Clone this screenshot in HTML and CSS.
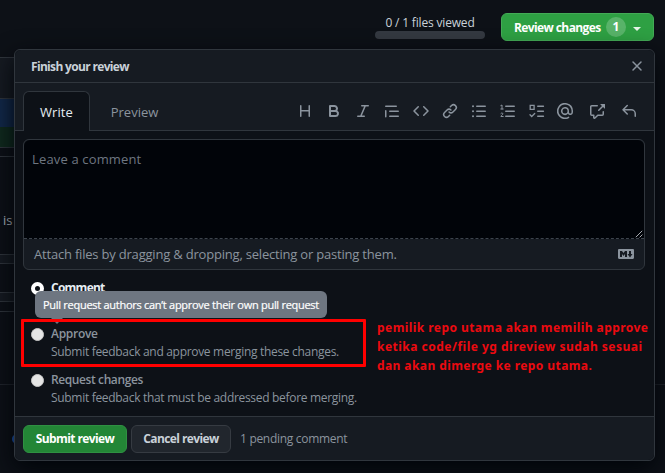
FILE: index.html
```html
<!DOCTYPE html>
<html lang="en">
<head>
<meta charset="utf-8">
<title>Finish your review</title>
<link rel="stylesheet" href="styles.css">
</head>
<body>
<div class="page">
  <header class="topbar">
    <div class="viewed">
      <span class="viewed-label">0 / 1 files viewed</span>
      <div class="progress"></div>
    </div>
    <button class="btn review-btn"><span class="review-label">Review changes</span><span class="counter">1</span><span class="caret"></span></button>
  </header>
  <div class="diff">
    <div class="file-head"></div>
    <div class="hunk"></div>
    <div class="added"></div>
    <div class="divider-a"></div>
    <div class="remark"><span>is</span></div>
    <div class="band"></div>
    <div class="space"></div>
    <div class="band"></div>
    <div class="band plain"></div>
    <div class="thread"></div>
    <div class="dot-row"><span class="dot"></span></div>
  </div>
</div>

<section class="popover">
  <div class="pop-head">
    <h1 class="pop-title">Finish your review</h1>
    <svg class="close" width="12" height="12" viewBox="0 0 12 12"><path d="M2 2l8 8M10 2l-8 8"/></svg>
  </div>
  <div class="tabs">
    <div class="tab active"><span class="t-write">Write</span></div>
    <div class="tab"><span class="t-preview">Preview</span></div>
    <div class="toolbar">
      <svg viewBox="0 0 16 16"><path d="M3.75 2a.75.75 0 0 1 .75.75V7h7V2.75a.75.75 0 0 1 1.5 0v10.5a.75.75 0 0 1-1.5 0V8.5h-7v4.75a.75.75 0 0 1-1.5 0V2.75A.75.75 0 0 1 3.75 2Z"/></svg>
      <svg viewBox="0 0 16 16"><path d="M4 2h4.5a3.501 3.501 0 0 1 2.852 5.53A3.499 3.499 0 0 1 9.5 14H4a1 1 0 0 1-1-1V3a1 1 0 0 1 1-1Zm1 7v3h4.5a1.5 1.5 0 0 0 0-3Zm3.5-2a1.5 1.5 0 0 0 0-3H5v3Z"/></svg>
      <svg viewBox="0 0 16 16"><path d="M6 2.75A.75.75 0 0 1 6.75 2h6.5a.75.75 0 0 1 0 1.5h-2.505l-3.858 9H9.25a.75.75 0 0 1 0 1.5h-6.5a.75.75 0 0 1 0-1.5h2.505l3.858-9H6.75A.75.75 0 0 1 6 2.75Z"/></svg>
      <svg viewBox="0 0 16 16"><path d="M1.75 2.5h10.5a.75.75 0 0 1 0 1.5H1.75a.75.75 0 0 1 0-1.5Zm4 5h8.5a.75.75 0 0 1 0 1.5h-8.5a.75.75 0 0 1 0-1.5Zm0 5h8.5a.75.75 0 0 1 0 1.5h-8.5a.75.75 0 0 1 0-1.5ZM2.5 7.75v6a.75.75 0 0 1-1.5 0v-6a.75.75 0 0 1 1.5 0Z"/></svg>
      <svg viewBox="0 0 16 16"><path d="m11.28 3.22 4.25 4.25a.75.75 0 0 1 0 1.06l-4.25 4.25a.749.749 0 0 1-1.275-.326.749.749 0 0 1 .215-.734L13.94 8l-3.72-3.72a.749.749 0 0 1 .326-1.275.749.749 0 0 1 .734.215Zm-6.56 0a.751.751 0 0 1 1.042.018.751.751 0 0 1 .018 1.042L2.06 8l3.72 3.72a.749.749 0 0 1-.326 1.275.749.749 0 0 1-.734-.215L.47 8.53a.75.75 0 0 1 0-1.06Z"/></svg>
      <svg viewBox="0 0 16 16"><path d="m7.775 3.275 1.25-1.25a3.5 3.5 0 1 1 4.95 4.95l-2.5 2.5a3.5 3.5 0 0 1-4.95 0 .751.751 0 0 1 .018-1.042.751.751 0 0 1 1.042-.018 1.998 1.998 0 0 0 2.83 0l2.5-2.5a2.002 2.002 0 0 0-2.83-2.83l-1.25 1.25a.751.751 0 0 1-1.042-.018.751.751 0 0 1-.018-1.042Zm-4.69 9.64a1.998 1.998 0 0 0 2.83 0l1.25-1.25a.751.751 0 0 1 1.042.018.751.751 0 0 1 .018 1.042l-1.25 1.25a3.5 3.5 0 1 1-4.95-4.95l2.5-2.5a3.5 3.5 0 0 1 4.95 0 .751.751 0 0 1-.018 1.042.751.751 0 0 1-1.042.018 1.998 1.998 0 0 0-2.83 0l-2.5 2.5a1.998 1.998 0 0 0 0 2.83Z"/></svg>
      <svg class="line" viewBox="0 0 16 16"><path d="M5.7 3.25h8.6M5.7 8.25h8.6M5.7 13.25h8.6"/><path d="M2 3.25h.01M2 8.25h.01M2 13.25h.01" stroke-width="2"/></svg>
      <svg class="line" viewBox="0 0 16 16"><path d="M5.7 3.25h8.6M5.7 8.25h8.6M5.7 13.25h8.6"/><path d="M.8 2.6 2 2v4M.8 6h2.4M.9 10.4c.4-.6 2-.6 2 .4 0 .9-1.9 1.6-2 2.7h2.3" stroke-width="1"/></svg>
      <svg class="line" viewBox="0 0 16 16"><path d="M8.7 3.25h5.8M8.7 8.25h5.8M8.7 13.25h5.8M1.2 2.4h3.9v4H1.2ZM1 11.7l1.7 1.8 3-3"/></svg>
      <svg class="mention" viewBox="0 0 16 16"><path d="M4.75 2.37a6.501 6.501 0 0 0 6.5 11.26.75.75 0 0 1 .75 1.298A7.999 7.999 0 0 1 .989 4.148 8 8 0 0 1 16 7.75v1.5a2.75 2.75 0 0 1-5.072 1.475 3.999 3.999 0 0 1-6.65-4.19A4 4 0 0 1 12 8v1.25a1.25 1.25 0 0 0 2.5 0V7.867a6.5 6.5 0 0 0-9.75-5.496ZM10.5 8a2.5 2.5 0 1 0-5 0 2.5 2.5 0 0 0 5 0Z"/></svg>
      <svg class="wide" viewBox="0 0 16 16"><path d="M2.75 3.5a.25.25 0 0 0-.25.25v7.5c0 .138.112.25.25.25h2a.75.75 0 0 1 .75.75v2.19l2.72-2.72a.749.749 0 0 1 .53-.22h4.5a.25.25 0 0 0 .25-.25v-2.5a.75.75 0 0 1 1.5 0v2.5A1.75 1.75 0 0 1 13.25 13H9.06l-2.573 2.573A1.458 1.458 0 0 1 4 14.543V13H2.75A1.75 1.75 0 0 1 1 11.25v-7.5C1 2.784 1.784 2 2.75 2h5.5a.75.75 0 0 1 0 1.5ZM16 1.25v4.146a.25.25 0 0 1-.427.177L14.03 4.03l-3.75 3.75a.749.749 0 0 1-1.275-.326.749.749 0 0 1 .215-.734l3.75-3.75-1.543-1.543A.25.25 0 0 1 11.604 1h4.146a.25.25 0 0 1 .25.25Z"/></svg>
      <svg class="wide" viewBox="0 0 16 16"><path d="M6.78 1.97a.75.75 0 0 1 0 1.06L3.81 6h6.44A4.75 4.75 0 0 1 15 10.75v2.5a.75.75 0 0 1-1.5 0v-2.5a3.25 3.25 0 0 0-3.25-3.25H3.81l2.97 2.97a.749.749 0 0 1-.326 1.275.749.749 0 0 1-.734-.215L1.47 7.28a.75.75 0 0 1 0-1.06l4.25-4.25a.75.75 0 0 1 1.06 0Z"/></svg>
    </div>
  </div>
  <div class="editor">
    <div class="textarea">
      <span class="t-placeholder">Leave a comment</span>
      <svg class="grip" width="8" height="8" viewBox="0 0 8 8"><path d="M.8 7.2 7.2.8M4.6 7.4l2.8-2.8"/></svg>
    </div>
    <div class="attach">
      <span class="t-attach">Attach files by dragging &amp; dropping, selecting or pasting them.</span>
      <svg class="md" width="16" height="16" viewBox="0 0 16 16"><path d="M14.85 3c.63 0 1.15.52 1.14 1.15v7.7c0 .63-.51 1.15-1.15 1.15H1.15C.52 13 0 12.48 0 11.84V4.15C0 3.52.52 3 1.15 3ZM9 11V5H7L5.5 7 4 5H2v6h2V8l1.5 1.92L7 8v3Zm2.99.5L14.5 8H13V5h-2v3H9.5Z"/></svg>
    </div>
  </div>
  <div class="options">
    <div class="option">
      <span class="radio checked"></span>
      <div><div class="name strong"><span class="t-comment">Comment</span></div></div>
    </div>
    <div class="option">
      <span class="radio"></span>
      <div><div class="name"><span class="t-approve">Approve</span></div><div class="desc"><span>Submit feedback and approve merging these changes.</span></div></div>
    </div>
    <div class="option">
      <span class="radio"></span>
      <div><div class="name"><span class="t-request">Request changes</span></div><div class="desc"><span>Submit feedback that must be addressed before merging.</span></div></div>
    </div>
    <div class="tooltip"><span class="t-tip">Pull request authors can’t approve their own pull request</span></div>
    <div class="highlight"></div>
    <div class="note"><div class="n1">pemilik repo utama akan memilih approve</div><div class="n2">ketika code/file yg direview sudah sesuai</div><div class="n3">dan akan dimerge ke repo utama.</div></div>
  </div>
  <div class="pop-foot">
    <button class="btn submit">Submit review</button>
    <button class="btn cancel">Cancel review</button>
    <span class="t-pending">1 pending comment</span>
  </div>
</section>
</body>
</html>
```

FILE: styles.css
```css
* { box-sizing: border-box; }
body { margin: 0; width: 665px; height: 473px; overflow: hidden; background: #0d1117; color: #c9d1d9; font: 13px/18px "Open Sans", "Noto Sans", sans-serif; }
span, .note div, h1, .btn { white-space: nowrap; }
.page { display: flex; flex-direction: column; height: 473px; }
.topbar { display: flex; justify-content: flex-end; align-items: flex-start; gap: 16px; height: 57px; padding: 13px 11px 0 0; }
.viewed { display: flex; flex-direction: column; align-items: center; width: 110px; font-size: 12px; letter-spacing: -.17px; }
.viewed-label { height: 18px; line-height: 20px; }
.progress { width: 110px; height: 8px; border-radius: 4px; background: #343941; }
.btn { display: flex; align-items: center; justify-content: center; height: 28px; padding: 0; border: 1px solid #3fa351; border-radius: 6px; color: #fff; font: 700 12px/18px "Open Sans", "Noto Sans", sans-serif; letter-spacing: -.6px; }
.review-btn { width: 153px; background: #2ea043; justify-content: flex-start; padding-left: 12px; border-color: #43aa56; }
.review-label { width: 86px; margin-top: 1px; }
.counter { width: 20px; height: 20px; margin-left: 6px; border-radius: 10px; background: #58b369; line-height: 20px; text-align: center; letter-spacing: 0; }
.caret { margin: 3px 0 0 7px; border: 4px solid transparent; border-top-color: #e6f4e8; border-bottom: 0; }

.diff { flex: 1; display: flex; flex-direction: column; }
.diff > div { width: 20px; flex: none; }
.file-head { height: 42px; background: #161b22; border: solid #30363d; border-width: 1px 0; }
.hunk { height: 28px; background: #12294a; }
.added { height: 20px; background: #102b1e; }
.divider-a { height: 10px; border: solid #30363d; border-width: 1px 0; }
.remark { height: 97px; padding: 54px 0 0 3px; color: #b4bbc3; }
.band { height: 10px; background: #161b22; border: solid #30363d; border-width: 1px 0; }
.diff > .band.plain { background: none; border-top: 0; }
.space { height: 28px; }
.diff > .thread { width: auto; height: 73px; border-bottom: 1px solid #21262d; }
.dot-row { padding-top: 49px; padding-left: 12px; display: flex; }
.dot { flex: none; width: 10px; height: 10px; border: 2px solid #1f5fc4; border-radius: 50%; }

.popover { position: absolute; left: 14px; top: 49px; width: 641px; height: 412px; display: flex; flex-direction: column; border: 1px solid #30363d; border-radius: 6px; background: #0d1117; box-shadow: 0 8px 24px #010409; }
.pop-head { height: 33px; display: flex; align-items: center; justify-content: space-between; padding: 0 11px 0 16px; background: #161b22; border-bottom: 1px solid #30363d; border-radius: 6px 6px 0 0; }
.pop-title { margin: 2px 0 0; font-size: 12px; line-height: 18px; font-weight: 700; letter-spacing: -.67px; }
.close { fill: none; stroke: #8b949e; stroke-width: 1.5; stroke-linecap: round; }
.tabs { height: 48px; display: flex; align-items: flex-end; padding-left: 8px; background: #161b22; border-bottom: 1px solid #30363d; color: #8b949e; }
.tab { height: 40px; margin-bottom: -1px; width: 67px; display: flex; justify-content: center; padding-top: 12px; }
.tab + .tab { margin-left: 11px; }
.tab.active { padding-top: 11px; background: #0d1117; border: 1px solid #30363d; border-bottom: 0; border-radius: 6px 6px 0 0; color: #e6edf3; }
.t-write { letter-spacing: .1px; }
.toolbar { display: flex; align-items: center; gap: 13px; height: 40px; margin-left: 129px; padding-top: 1px; }
.toolbar svg { width: 16px; height: 16px; fill: #8b949e; flex: none; }
.toolbar .line { fill: none; stroke: #8b949e; stroke-width: 1.3; stroke-linecap: round; }
.toolbar .mention { margin-left: -1px; }
.toolbar .wide { margin-left: 3px; }

.editor { height: 131px; margin: 8px 9px 0 8px; display: flex; flex-direction: column; border: 1px solid #30363d; border-radius: 6px; background: #161b22; }
.textarea { flex: 1; display: flex; justify-content: space-between; align-items: flex-start; padding: 10px 1px 0 8px; background: #010409; border-radius: 6px 6px 0 0; border-bottom: 1px dashed #3d444d; color: #6e7681; }
.t-placeholder { letter-spacing: .15px; }
.grip { align-self: flex-end; fill: none; stroke: #a9adb2; stroke-width: 1; }
.attach { height: 30px; display: flex; align-items: center; justify-content: space-between; padding: 0 10px; color: #8b949e; }
.t-attach { letter-spacing: -.2px; }
.md { fill: #8b949e; }

.options { position: relative; height: 146px; padding: 8px 0 0 16px; }
.option { display: flex; height: 46px; gap: 7px; font-size: 12px; color: #8b949e; }
.radio { flex: none; width: 13px; height: 13px; margin-top: 4px; border-radius: 50%; background: #e5e5e5; border: 1px solid #c8c8c8; }
.radio.checked { background: #0d1117; border: 4px solid #fff; }
.name { font-weight: 600; line-height: 18px; margin-top: 1px; }
.name.strong { color: #e6edf3; font-weight: 700; }
.t-comment { letter-spacing: -.75px; }
.t-approve { letter-spacing: -.28px; }
.t-request { letter-spacing: -.4px; }
.desc { line-height: 18px; letter-spacing: -.305px; }
.tooltip { position: absolute; left: 20px; top: 21px; width: 292px; height: 27px; display: flex; align-items: center; justify-content: center; border-radius: 6px; background: #6e7681; color: #fff; font-size: 11px; }
.t-tip { letter-spacing: -.28px; -webkit-text-stroke: .2px #fff; }
.tooltip::after { content: ""; position: absolute; left: 16px; top: 27px; border: 6px solid transparent; border-top-color: #6e7681; border-bottom: 0; }
.highlight { position: absolute; left: 6px; top: 49px; width: 345px; height: 48px; border: 3px solid #f00; border-radius: 1px; }
.note { position: absolute; left: 362px; top: 48px; color: #ec0a10; font: 700 12px/19px "Noto Sans", sans-serif; }
.n1 { letter-spacing: .44px; }
.n2 { letter-spacing: .49px; }
.n3 { letter-spacing: .42px; }

.pop-foot { flex: 1; display: flex; align-items: center; padding-left: 8px; background: #161b22; border-top: 1px solid #30363d; border-radius: 0 0 6px 6px; font-size: 12px; color: #8b949e; }
.submit { width: 104px; background: #238636; border-color: #2f9142; }
.cancel { width: 100px; margin: 0 9px 0 4px; background: #21262d; border-color: #363b42; color: #c9d1d9; }
.t-pending { letter-spacing: -.3px; }
```
